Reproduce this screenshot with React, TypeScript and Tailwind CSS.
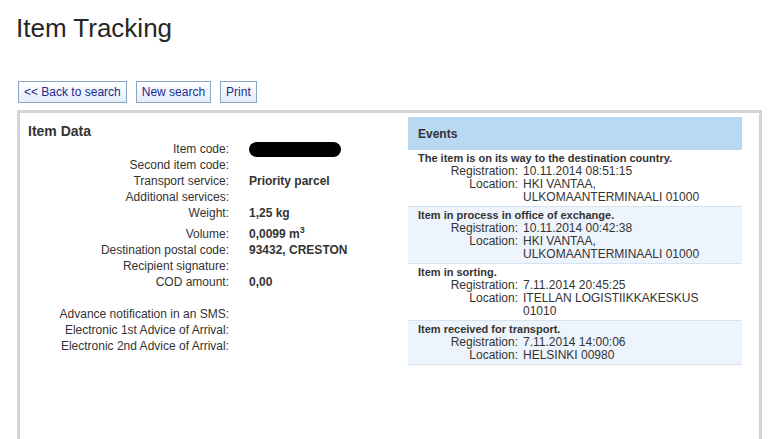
import React from 'react';

interface EventItem {
    title: string;
    registration: string;
    location: string[];
}

const events: EventItem[] = [
    {
        title: 'The item is on its way to the destination country.',
        registration: '10.11.2014 08:51:15',
        location: ['HKI VANTAA,', 'ULKOMAANTERMINAALI 01000'],
    },
    {
        title: 'Item in process in office of exchange.',
        registration: '10.11.2014 00:42:38',
        location: ['HKI VANTAA,', 'ULKOMAANTERMINAALI 01000'],
    },
    {
        title: 'Item in sorting.',
        registration: '7.11.2014 20:45:25',
        location: ['ITELLAN LOGISTIIKKAKESKUS', '01010'],
    },
    {
        title: 'Item received for transport.',
        registration: '7.11.2014 14:00:06',
        location: ['HELSINKI 00980'],
    },
];

const Btn: React.FC<{ label: string }> = ({ label }) => (
    <button className="h-[22px] px-[5px] border border-[#8aa4c4] bg-gradient-to-b from-white to-[#e3edf9] text-[12px] leading-[20px] text-[#1b2a8f]">
        {label}
    </button>
);

const Row: React.FC<{ label: string; children?: React.ReactNode; tall?: boolean }> = ({ label, children, tall }) => (
    <div className={`flex items-end ${tall ? 'h-[21px]' : 'h-[16px]'}`}>
        <div className="w-[209px] text-right leading-[16px]">{label}</div>
        <div className="ml-[20px] font-bold leading-[16px]">{children}</div>
    </div>
);

const EventRow: React.FC<{ ev: EventItem; alt: boolean }> = ({ ev, alt }) => (
    <div className={`py-[2px] border-b border-[#d5e3f1] leading-[13px] ${alt ? 'bg-[#eef4fc]' : 'bg-white'}`}>
        <div className="pl-[10px] text-[11px] font-bold">{ev.title}</div>
        <div className="flex text-[12px]">
            <div className="w-[110px] text-right">Registration:</div>
            <div className="ml-[5px]">{ev.registration}</div>
        </div>
        <div className="flex text-[12px]">
            <div className="w-[110px] text-right">Location:</div>
            <div className="ml-[5px]">
                {ev.location.map((l) => (
                    <div key={l}>{l}</div>
                ))}
            </div>
        </div>
    </div>
);

export default function App() {
    return (
        <div className="w-[774px] h-[439px] overflow-hidden bg-white text-[#333] font-['Liberation_Sans',Arial,sans-serif]">
            <h1 className="pl-[16px] pt-[13px] text-[26px] leading-[30px] font-normal text-[#262626]">Item Tracking</h1>

            <div className="flex gap-[9px] ml-[18px] mt-[38px]">
                <Btn label="<< Back to search" />
                <Btn label="New search" />
                <Btn label="Print" />
            </div>

            <div className="ml-[17px] mt-[7px] w-[745px] h-[400px] border-[3px] border-[#d4d4d4] flex">
                <div className="w-[388px] text-[12px]">
                    <div className="pl-[8px] pt-[10px] text-[14px] font-bold leading-[16px] mb-[2px]">Item Data</div>
                    <Row label="Item code:">
                        <div className="w-[92px] h-[15px] mt-[1px] rounded-full bg-black" />
                    </Row>
                    <Row label="Second item code:" />
                    <Row label="Transport service:">Priority parcel</Row>
                    <Row label="Additional services:" />
                    <Row label="Weight:">1,25 kg</Row>
                    <Row label="Volume:" tall>
                        0,0099 m<span className="text-[9px] align-super">3</span>
                    </Row>
                    <Row label="Destination postal code:">93432, CRESTON</Row>
                    <Row label="Recipient signature:" />
                    <Row label="COD amount:">0,00</Row>
                    <div className="h-[16px]" />
                    <Row label="Advance notification in an SMS:" />
                    <Row label="Electronic 1st Advice of Arrival:" />
                    <Row label="Electronic 2nd Advice of Arrival:" />
                </div>

                <div className="w-[334px] mt-[4px] self-start">
                    <div className="h-[33px] bg-[#b9d8f2] pl-[10px] flex items-center text-[12px] font-bold">Events</div>
                    {events.map((ev, i) => (
                        <EventRow key={ev.title} ev={ev} alt={i % 2 === 1} />
                    ))}
                </div>
            </div>
        </div>
    );
}
